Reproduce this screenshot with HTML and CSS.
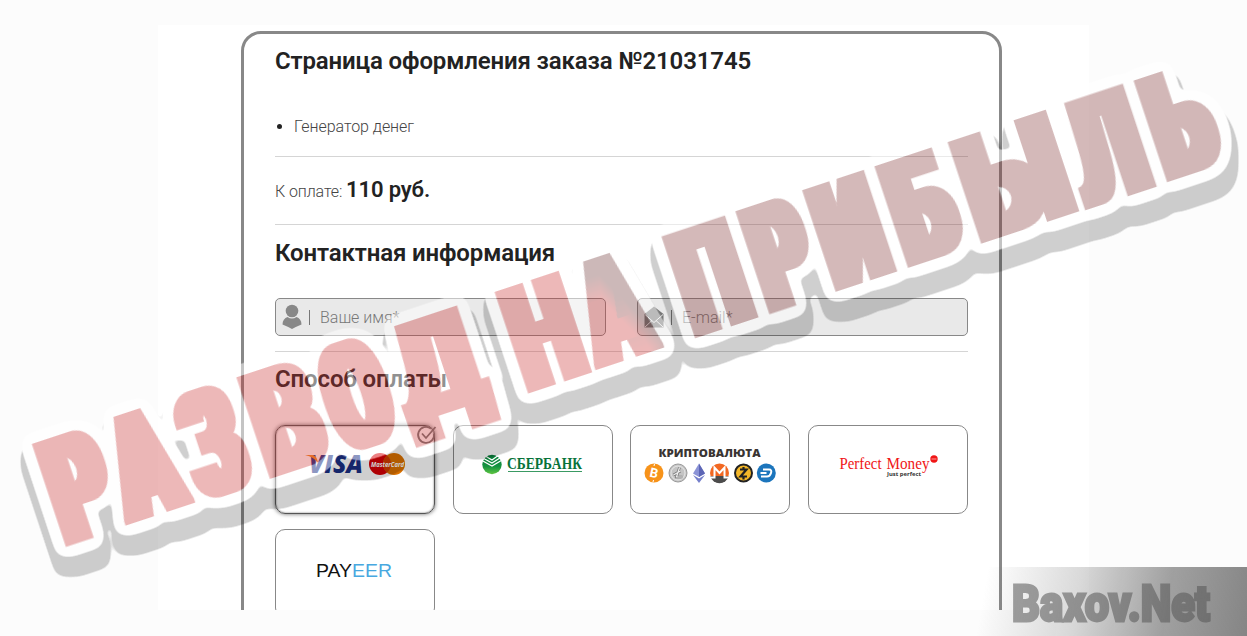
FILE: index.html
```html
<!DOCTYPE html>
<html lang="ru">
<head>
    <meta charset="UTF-8">
    <meta name="viewport" content="width=device-width, initial-scale=1.0">
    <title>Страница оформления заказа</title>
    <link rel="stylesheet" href="styles.css">
</head>
<body>

    <div class="page">
        <div class="order">
            <h2 class="order-title">Страница оформления заказа №21031745</h2>
            <ul class="products">
                <li><span>Генератор денег</span></li>
            </ul>
            <div class="total">К оплате: <b>110 руб.</b></div>

            <form class="contacts">
                <h2>Контактная информация</h2>
                <div class="fields">
                    <label class="field">
                        <svg class="field-icon" width="20" height="26" viewBox="0 0 20 26">
                            <circle cx="10" cy="7" r="6.3" fill="#888"/>
                            <path d="M.5 20.500c0-4 2-6.500 5-7.500q4.500 3 9 0c3 1 5 3.500 5 7.500q-5 2-9.500 4.500q-4.500-2.500-9.500-4.500z" fill="#888"/>
                        </svg>
                        <input type="text" name="name" placeholder="Ваше имя*">
                    </label>
                    <label class="field">
                        <svg class="field-icon" width="20" height="26" viewBox="0 0 20 26">
                            <path d="M.5 10l9.500-7.500l9.500 7.500v13.500h-19z" fill="#777"/>
                            <path d="M1 10.500l9 8l9-8M1 23l7-6.500M19 23l-7-6.500" fill="none" stroke="#e9e9e9"/>
                        </svg>
                        <input type="text" name="email" placeholder="E-mail*">
                    </label>
                </div>
            </form>

            <h2>Способ оплаты</h2>
            <div class="methods">
                <div class="method selected">
                    <svg width="160" height="88" viewBox="0 0 160 88">
                        <text class="visa" x="34" y="47.500" textLength="54" lengthAdjust="spacingAndGlyphs">VISA</text>
                        <path d="M30 30h8q4 1 5 8q-4-6-13-8z" fill="#f08a24"/>
                        <circle cx="105" cy="39" r="11" fill="#d80006"/>
                        <circle cx="119" cy="39" r="11" fill="#dc7200"/>
                        <path d="M112 30.500a11 11 0 0 1 0 17a11 11 0 0 1 0-17z" fill="#d33c00"/>
                        <text class="mastercard" x="96" y="42" textLength="33" lengthAdjust="spacingAndGlyphs">MasterCard</text>
                    </svg>
                    <svg class="check" width="22" height="20" viewBox="0 0 22 20">
                        <path d="M18 8.500a8 8 0 1 1-3-5M6 8.500l4 4.500l9.500-11" fill="none" stroke="#777" stroke-width="1.800"/>
                    </svg>
                </div>
                <div class="method">
                    <svg width="160" height="88" viewBox="0 0 160 88">
                        <defs>
                            <linearGradient id="sber" x2="0" y2="1">
                                <stop offset="0" stop-color="#087c3b"/>
                                <stop offset=".6" stop-color="#159440"/>
                                <stop offset="1" stop-color="#62c642"/>
                            </linearGradient>
                        </defs>
                        <circle cx="39" cy="39.500" r="9.700" fill="url(#sber)"/>
                        <path d="M29 29l10 6l11-8M28 32l11 6l11-7M28 35l11 6l11-6.500" fill="none" stroke="#fff" stroke-width="1.200"/>
                        <text class="sber" x="54" y="43.500" textLength="75" lengthAdjust="spacingAndGlyphs">СБЕРБАНК</text>
                        <path d="M55 46.500h74" stroke="#3a9a63"/>
                    </svg>
                </div>
                <div class="method">
                    <svg width="160" height="88" viewBox="0 0 160 88">
                        <text class="crypto" x="28.500" y="31.500" textLength="102" lengthAdjust="spacingAndGlyphs">КРИПТОВАЛЮТА</text>
                        <circle cx="24" cy="48" r="9.500" fill="#f7931a"/>
                        <text class="coin" x="24" y="52.500" transform="rotate(12 24 48)">B</text>
                        <path d="M24 41l.5-2M23 57l.5-2" stroke="#fff"/>
                        <circle cx="48" cy="48" r="9" fill="#c4c4c4" stroke="#999"/>
                        <circle cx="48" cy="48" r="7" fill="none" stroke="#eee" stroke-width=".8"/>
                        <path d="M49.500 42.500l-3 9.500h6M43.500 50l7-4" fill="none" stroke="#777" stroke-width="2.600"/>
                        <path d="M49.500 42.500l-3 9.500h6M43.500 50l7-4" fill="none" stroke="#eee" stroke-width="1.200"/>
                        <path d="M69 38.500l-6 10l6 3.500l6-3.500z" fill="#8b93d6"/>
                        <path d="M69 38.500v13.500l6-3.500z" fill="#5c65b5"/>
                        <path d="M63 50l6 8l6-8l-6 3.500z" fill="#757fcb"/>
                        <circle cx="89.500" cy="48" r="9.500" fill="#f26822"/>
                        <path d="M80.300 51a9.500 9.500 0 0 0 18.400 0z" fill="#4c4c4c"/>
                        <path d="M80 52.500h4.500v-10l5 5.500l5-5.500v10h4.500" fill="none" stroke="#fff" stroke-width="2"/>
                        <circle cx="113.500" cy="48" r="8.500" fill="#f4b728" stroke="#222" stroke-width="2"/>
                        <path d="M110 44.500h6.500l-6 7h6.500M113.500 42v2M113.500 52v2.500" fill="none" stroke="#222" stroke-width="2.200"/>
                        <circle cx="136.300" cy="48" r="9.500" fill="#1c75bc"/>
                        <path d="M133 44.500h6q3 0 2 3.500t-4 3.500h-6M130.500 48h6" fill="none" stroke="#fff" stroke-width="2"/>
                    </svg>
                </div>
                <div class="method">
                    <svg width="160" height="88" viewBox="0 0 160 88">
                        <text class="perfect" x="31.500" y="44" textLength="42" lengthAdjust="spacingAndGlyphs">Perfect</text>
                        <text class="perfect" x="78.500" y="44" textLength="43" lengthAdjust="spacingAndGlyphs">Money</text>
                        <text class="motto" x="79" y="50.500" textLength="34" lengthAdjust="spacingAndGlyphs">Just perfect</text>
                        <circle cx="126" cy="34" r="3.700" fill="#f01616"/>
                        <path d="M123.500 34h5" stroke="#ff9c9c"/>
                    </svg>
                </div>
                <div class="method">
                    <svg width="160" height="88" viewBox="0 0 160 88">
                        <text class="payeer" x="41" y="47.500" textLength="76" lengthAdjust="spacingAndGlyphs">PAY<tspan fill="#48a8e0">EER</tspan></text>
                    </svg>
                </div>
            </div>
        </div>
    </div>

    <svg class="stamp" width="1247" height="636" viewBox="0 0 1247 636">
        <defs>
            <linearGradient id="ink" x1=".5" y1=".62" x2=".6" y2=".48">
                <stop offset="0" stop-color="#cb3434"/>
                <stop offset="1" stop-color="#6e3434"/>
            </linearGradient>
            <!-- makes the strokes of the letters heavier -->
            <filter id="heavy" filterUnits="userSpaceOnUse" x="-40" y="-160" width="1320" height="230" color-interpolation-filters="sRGB">
                <feMorphology operator="dilate" radius="7 2"/>
            </filter>
            <!-- white outline and grey shadow, each cut out under the layer above -->
            <filter id="sticker" filterUnits="userSpaceOnUse" x="0" y="0" width="1247" height="636" color-interpolation-filters="sRGB">
                <feMorphology in="SourceAlpha" operator="dilate" radius="4" result="grown"/>
                <feGaussianBlur in="grown" stdDeviation="5" result="soft"/>
                <feComponentTransfer in="soft" result="outline"><feFuncA type="linear" slope="18" intercept="-1"/></feComponentTransfer>
                <feMorphology in="SourceAlpha" operator="dilate" radius="8" result="grownMore"/>
                <feGaussianBlur in="grownMore" stdDeviation="5" result="softMore"/>
                <feComponentTransfer in="softMore" result="wide"><feFuncA type="linear" slope="18" intercept="-1"/></feComponentTransfer>
                <feOffset in="wide" dx="3" dy="16" result="moved"/>
                <feComposite in="moved" in2="outline" operator="out" result="shadow"/>
                <feFlood flood-color="#000" flood-opacity=".19"/>
                <feComposite in2="shadow" operator="in" result="grey"/>
                <feComposite in="outline" in2="SourceAlpha" operator="out" result="ring"/>
                <feFlood flood-color="#fff" flood-opacity=".5"/>
                <feComposite in2="ring" operator="in" result="white"/>
                <feComponentTransfer in="SourceGraphic" result="fill"><feFuncA type="linear" slope=".35"/></feComponentTransfer>
                <feMerge>
                    <feMergeNode in="grey"/>
                    <feMergeNode in="white"/>
                    <feMergeNode in="fill"/>
                </feMerge>
            </filter>
        </defs>
        <g filter="url(#sticker)">
            <g transform="translate(67 545) rotate(-18.300)">
                <g id="letters" filter="url(#heavy)"></g>
            </g>
        </g>
    </svg>

    <div class="brand">
        <svg width="262" height="69" viewBox="0 0 262 69">
            <g transform="translate(27 54) scale(1 1.150)">
                <text class="brand-name" x="0" y="0" textLength="198" lengthAdjust="spacingAndGlyphs">Baxov.Net</text>
            </g>
        </svg>
    </div>

    <script src="script.js"></script>
</body>
</html>
```
FILE: styles.css
```css
* {
    box-sizing: border-box;
}

body {
    margin: 0;
    height: 636px;
    overflow: hidden;
    background-color: #fcfcfc;
    font-family: Roboto, sans-serif;
    color: #222;
}

.page {
    width: 931px;
    height: 585px;
    margin: 25px 0 0 158px;
    padding: 6px 87px 0 83px;
    background-color: #fff;
    overflow: hidden;
}

.order {
    width: 761px;
    height: 700px;
    padding: 13px 31px 0;
    border: 3px solid #888;
    border-radius: 20px;
}

h2 {
    margin: 0;
    font-size: 24px;
    line-height: 28px;
    font-weight: 600;
    letter-spacing: -0.14px;
}

.products {
    margin: 0;
    height: 82px;
    padding: 42px 0 0 19px;
    border-bottom: 1px solid #d5d5d5;
    font-size: 16px;
    line-height: 20px;
    font-weight: 300;
    letter-spacing: -0.05px;
}

.products span {
    color: #444;
}

.total {
    height: 68px;
    padding-top: 19px;
    border-bottom: 1px solid #d5d5d5;
    font-size: 16px;
    line-height: 28px;
    font-weight: 300;
    letter-spacing: -0.1px;
    color: #444;
}

.total b {
    font-size: 22px;
    font-weight: 600;
    letter-spacing: -0.14px;
    color: #222;
}

.contacts {
    height: 127px;
    padding-top: 14px;
    margin-bottom: 13px;
    border-bottom: 1px solid #d5d5d5;
}

.fields {
    display: flex;
    gap: 31px;
    margin-top: 31px;
}

.field {
    display: flex;
    align-items: center;
    flex: 1;
    height: 38px;
    padding-left: 6px;
    border: 1px solid #888;
    border-radius: 5px;
    background-color: #e9e9e9;
}

.field input {
    width: 260px;
    height: 15px;
    margin-left: 7px;
    padding: 0 0 0 10px;
    border: 0;
    border-left: 1px solid #777;
    outline: 0;
    background: none;
    font: 300 16px/16px Roboto, sans-serif;
    overflow: visible;
}

.field input::placeholder {
    color: #777;
}

.methods {
    display: grid;
    grid-template-columns: repeat(4, 160px);
    column-gap: 17.700px;
    row-gap: 15px;
    margin-top: 32px;
}

.method {
    position: relative;
    height: 89px;
    border: 1px solid #888;
    border-radius: 10px;
}

.method svg {
    display: block;
    margin: -1px;
}

.method.selected {
    border-color: #555;
    box-shadow: 0 0 4px rgba(0, 0, 0, 0.6), inset 0 0 2px #666;
}

.method .check {
    position: absolute;
    top: 0;
    right: -3px;
}

.visa {
    font: italic 800 24px "Open Sans", sans-serif;
    fill: #1b2f84;
}

.mastercard {
    font: italic 700 7px "Open Sans", sans-serif;
    fill: #fff;
}

.sber {
    font: 700 16px "Liberation Serif", serif;
    fill: #08733a;
}

.crypto {
    font: 800 11px "Open Sans", sans-serif;
    fill: #3a3532;
}

.coin {
    font: 700 13px Roboto, sans-serif;
    text-anchor: middle;
    fill: #fff;
}

.perfect {
    font: 17px "Liberation Serif", serif;
    fill: #f01616;
}

.motto {
    font: 700 5.5px "Open Sans", sans-serif;
    fill: #333;
}

.payeer {
    font: 19px "Liberation Sans", sans-serif;
    fill: #111;
}

/* stickers over the page */
.stamp {
    position: absolute;
    top: 0;
    left: 0;
    pointer-events: none;
}

.stamp text {
    font: 900 100px Roboto, sans-serif;
}

.brand {
    position: absolute;
    right: 0;
    bottom: 0;
    width: 270px;
    height: 69px;
    padding-left: 8px;
    background: linear-gradient(100deg, rgba(128, 128, 128, 0) 4%, rgba(128, 128, 128, 0.3) 38%, rgba(128, 128, 128, 0.75) 70%, #858585 100%);
}

.brand-name {
    font: 900 44px Roboto, sans-serif;
    fill: #555;
    stroke: #555;
    stroke-width: 2.5;
    opacity: 0.55;
}
```
FILE: script.js
```js
// letter, left, right, top, bottom along the slanted baseline, colour
var letters = [
    ["Р", 0, 61, -106, 0, "#cb3434"],
    ["А", 63, 134, -106, 0, "#cb3434"],
    ["З", 141, 200, -108, 2, "#cb3434"],
    ["В", 215, 281, -106, 0, "#cb3434"],
    ["О", 290, 354, -108, 2, "#cb3434"],
    ["Д", 362, 452, -106, 17, "#cb3434"],
    ["Н", 487, 551, -106, 0, "#cb3434"],
    ["А", 558, 628, -106, 0, "url(#ink)"],
    ["П", 663, 727, -106, 0, "#853636"],
    ["Р", 741, 799, -106, 0, "#853636"],
    ["И", 811, 873, -106, 0, "#853636"],
    ["Б", 887, 950, -106, 0, "#853636"],
    ["Ы", 964, 1065, -106, 0, "#853636"],
    ["Л", 1073, 1146, -106, 1, "#853636"],
    ["Ь", 1160, 1222, -106, 0, "#853636"]
];

var group = document.getElementById("letters");
var ctx = document.createElement("canvas").getContext("2d");
ctx.font = "900 100px Roboto, sans-serif";

letters.forEach(function (item) {
    var m = ctx.measureText(item[0]);
    // leave room for the growth that the "heavy" filter adds
    var left = item[1] + 5;
    var top = item[3] + 1;
    var sx = (item[2] - 5 - left) / (m.actualBoundingBoxRight + m.actualBoundingBoxLeft);
    var sy = (item[4] - 1 - top) / (m.actualBoundingBoxAscent + m.actualBoundingBoxDescent);
    var x = left + m.actualBoundingBoxLeft * sx;
    var y = top + m.actualBoundingBoxAscent * sy;
    var text = document.createElementNS("http://www.w3.org/2000/svg", "text");
    text.textContent = item[0];
    text.setAttribute("transform", "translate(" + x + " " + y + ") scale(" + sx + " " + sy + ")");
    text.setAttribute("fill", item[5]);
    group.appendChild(text);
});
```
